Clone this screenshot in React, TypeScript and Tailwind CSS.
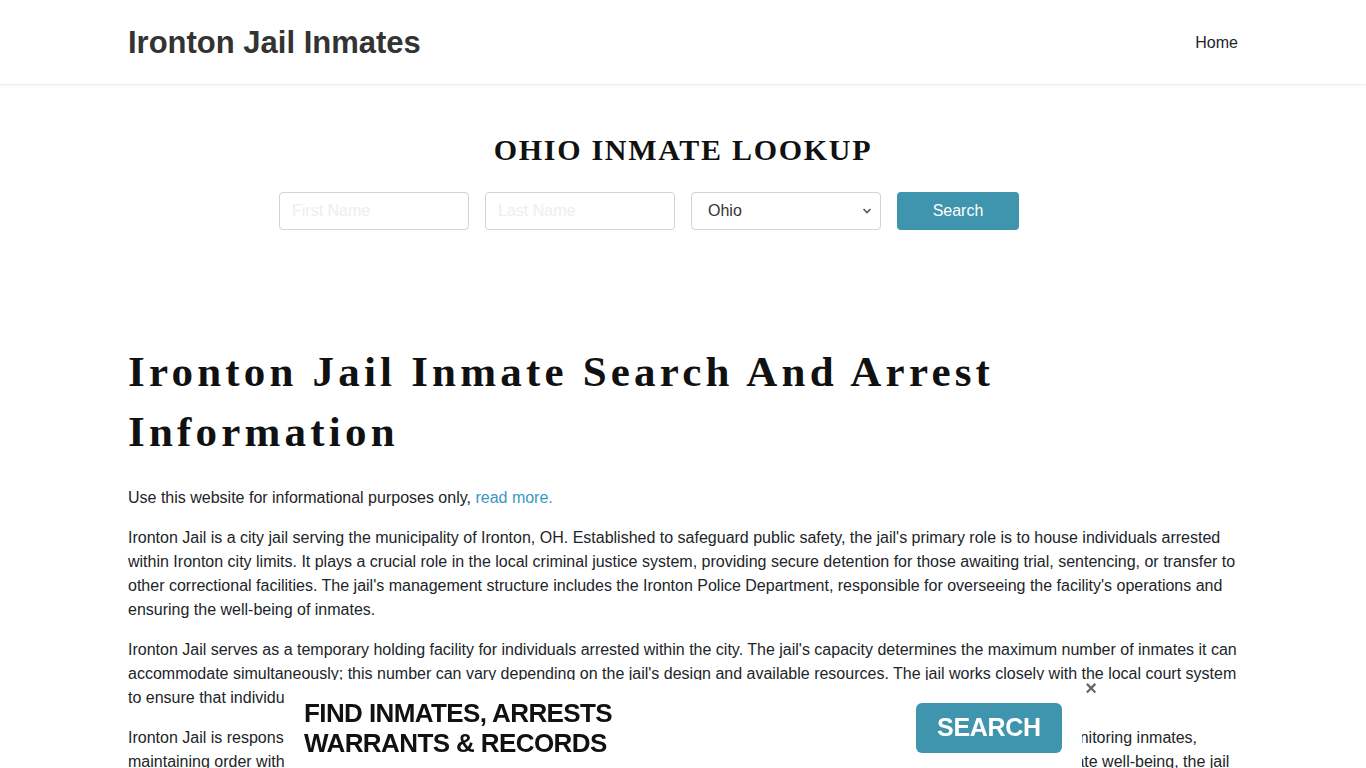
import React from "react";

export default function App() {
  const sans = { fontFamily: '"Liberation Sans", Arial, sans-serif' };
  const serif = { fontFamily: '"Liberation Serif", "Times New Roman", serif' };
  return (
    <div className="min-h-screen bg-white text-[#212529]" style={sans}>
      <header className="h-[85px] bg-white border-b border-[#f0f0f0] shadow-[0_2px_4px_rgba(0,0,0,0.03)]">
        <div className="mx-auto w-[1110px] h-full flex items-center justify-between pt-[1px]">
          <div className="text-[31px] font-bold text-[#333] leading-none">Ironton Jail Inmates</div>
          <a className="text-[16px] text-[#212529]">Home</a>
        </div>
      </header>

      <main className="mx-auto w-[1110px]">
        <section className="pt-[47px] flex flex-col">
          <h2 className="self-center text-[30px] font-bold tracking-[1.7px] leading-[36px] text-[#111]" style={serif}>
            OHIO INMATE LOOKUP
          </h2>
          <div className="mt-[24px] ml-[151px] flex gap-[16px]">
            <input
              className="w-[190px] h-[38px] border border-[#ced4da] rounded-[4px] px-3 text-[16px] placeholder:text-[#eee]"
              placeholder="First Name"
            />
            <input
              className="w-[190px] h-[38px] border border-[#ced4da] rounded-[4px] px-3 text-[16px] placeholder:text-[#eee]"
              placeholder="Last Name"
            />
            <div className="w-[190px] h-[38px] border border-[#ced4da] rounded-[4px] pl-4 pr-2 flex items-center justify-between text-[16px] text-[#333]">
              <span>Ohio</span>
              <svg width="10" height="8" viewBox="0 0 10 8">
                <path d="M1.5 2 L5 5.5 L8.5 2" stroke="#555" strokeWidth="1.6" fill="none" />
              </svg>
            </div>
            <button className="w-[122px] h-[38px] rounded-[4px] bg-[#3f95ae] text-white text-[16px]">Search</button>
          </div>
        </section>

        <h1
          className="mt-[112px] text-[43px] font-bold leading-[60px] tracking-[4.2px] text-[#111]"
          style={serif}
        >
          Ironton Jail Inmate Search And Arrest
          <br />
          Information
        </h1>

        <div className="mt-[24px] text-[16px] leading-[24px] text-[#212529]">
          <p className="mb-4">
            Use this website for informational purposes only, <a className="text-[#3a97c4]">read more.</a>
          </p>
          <p className="mb-4">
            Ironton Jail is a city jail serving the municipality of Ironton, OH. Established to safeguard public safety, the jail's primary role is to house individuals arrested within Ironton city limits. It plays a crucial role in the local criminal justice system, providing secure detention for those awaiting trial, sentencing, or transfer to other correctional facilities. The jail's management structure includes the Ironton Police Department, responsible for overseeing the facility's operations and ensuring the well-being of inmates.
          </p>
          <p className="mb-4">
            Ironton Jail serves as a temporary holding facility for individuals arrested within the city. The jail's capacity determines the maximum number of inmates it can accommodate simultaneously; this number can vary depending on the jail's design and available resources. The jail works closely with the local court system to ensure that individuals are processed efficiently.
          </p>
          <p className="mb-4">
            Ironton Jail is responsible for a range of daily operations, including booking and processing all arrestees, conducting searches, and monitoring inmates, maintaining order within the facility and upholding strict safety and security standards for staff, inmates and all visitors. To promote inmate well-being, the jail provides basic necessities such as meals, medical care, and access to legal resources.
          </p>
        </div>
      </main>

      <div className="fixed bottom-0 left-[284px] w-[798px] h-[88px] bg-white">
        <button className="absolute right-[-15px] top-[-2px] text-[#666] text-[20px] font-bold leading-none">×</button>
        <div className="flex items-center justify-between h-full pl-[20px] pr-[20px] pt-[8px]">
          <div className="text-[26px] font-bold leading-[30px] text-[#111] tracking-[-0.6px]">
            FIND INMATES, ARRESTS
            <br />
            WARRANTS &amp; RECORDS
          </div>
          <button className="w-[146px] h-[50px] rounded-[6px] bg-[#3f95ae] text-white text-[25px] font-bold tracking-[-0.3px]">SEARCH</button>
        </div>
      </div>
    </div>
  );
}
